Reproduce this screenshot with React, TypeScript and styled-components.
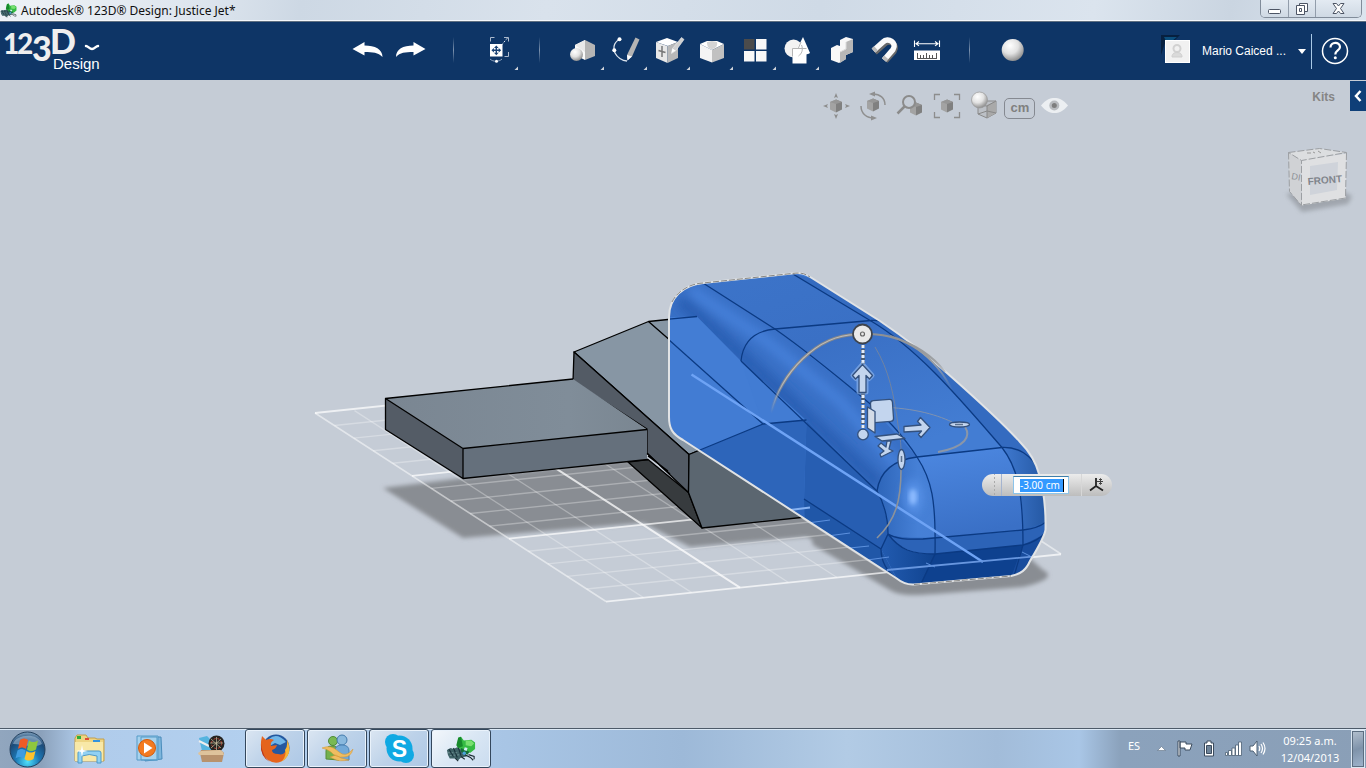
import React from "react";
import styled, { createGlobalStyle } from "styled-components";

const GlobalStyle = createGlobalStyle`
  *, *::before, *::after { box-sizing: border-box; }
  body { margin: 0; background: #c5ccd6; font-family: "Noto Sans", sans-serif; }
  button, input { font: inherit; color: inherit; margin: 0; padding: 0; border: 0; background: none; }
  svg { display: block; flex: none; }
`;

const Page = styled.div`
  display: flex;
  flex-direction: column;
  min-height: 100vh;
`;

/* Window frame */

const TitleBar = styled.header`
  display: flex;
  align-items: flex-start;
  justify-content: space-between;
  height: 22px;
  padding-right: 4px;
  background: linear-gradient(100deg, #eef2f6 0, #dde5ee 15%, #cdd8e4 22%, #d9e2ec 40%, #cfdae6 60%, #dbe4ee 80%, #cad5e1 90%, #dce5ef 100%);
  border-bottom: 1px solid #5f6f80;
  box-shadow: inset 0 -1px #f4f7fa;
`;

const WindowTitle = styled.h1`
  display: flex;
  align-items: center;
  gap: 4px;
  height: 20px;
  margin: 0;
  font-size: 12px;
  font-weight: 400;
  color: #101010;
  white-space: nowrap;
`;

const WindowControls = styled.div`
  display: flex;
  border: 1px solid #818c9a;
  border-top: 0;
  border-radius: 0 0 5px 5px;
  overflow: hidden;
`;

const WindowButton = styled.button<{ $wide?: boolean }>`
  display: grid;
  place-items: center;
  width: ${(p) => (p.$wide ? 46 : 27)}px;
  height: 17px;
  background: linear-gradient(#e3eaf2, #cfd9e4);
  & + & { border-left: 1px solid #929dab; }
`;

/* Application bar */

const AppBar = styled.div`
  display: grid;
  grid-template-columns: minmax(110px, 1fr) auto minmax(210px, 1fr);
  height: 58px;
  background: #0e3566;
  color: #fff;
`;

const BrandButton = styled.button`
  justify-self: start;
  height: 58px;
  cursor: pointer;
  svg { overflow: visible; }
`;

const Toolbar = styled.nav`
  display: flex;
  margin-left: 16px;
  padding-top: 11px;
`;

const ToolButton = styled.button`
  width: 43px;
  height: 38px;
`;

const Separator = styled.span`
  width: 1px;
  height: 26px;
  margin: 4px 22px 0 20px;
  background: linear-gradient(#0e3566, #7d93af, #0e3566);
`;

const Account = styled.div`
  display: flex;
  align-items: center;
  justify-content: flex-end;
  padding-right: 17px;
  font-family: "Liberation Sans", sans-serif;
  font-size: 12px;
`;

const AccountButton = styled.button`
  display: flex;
  align-items: center;
  gap: 12px;
  padding-right: 5px;
  white-space: nowrap;
`;

const HelpButton = styled.button`
  height: 35px;
  padding-left: 9px;
  border-left: 1px solid #a9c9e6;
`;

/* Modelling viewport */

const Viewport = styled.main`
  position: relative;
  flex: 1;
  min-height: 520px;
  background: #c5ccd6;
`;

const SceneCanvas = styled.svg`
  position: absolute;
  inset: 0;
  width: 100%;
  height: 100%;
`;

const Overlay = styled.div`
  position: relative;
  display: flex;
  flex-direction: column;
  align-items: flex-end;
`;

const OverlayRow = styled.div`
  display: flex;
  align-items: flex-start;
  padding-top: 1px;
`;

const ViewTools = styled.nav`
  display: flex;
  align-items: center;
  margin-right: 244px;
  padding-top: 6px;
`;

const ViewButton = styled.button`
  width: 37px;
  height: 38px;
`;

const UnitButton = styled.button`
  height: 21px;
  width: 31px;
  margin: 4px 6px 0 1px;
  border: 1px solid #858991;
  border-radius: 5px;
  font: bold 13px/18px "Liberation Sans", sans-serif;
  color: #808080;
`;

const KitsLabel = styled.span`
  padding: 7px 15px 0 0;
  font: bold 12px/18px "Liberation Sans", sans-serif;
  color: #858585;
`;

const KitsTab = styled.button`
  display: grid;
  place-items: center;
  width: 16px;
  height: 30px;
  background: #0f3f78;
`;

const CubeButton = styled.button`
  width: 80px;
  height: 76px;
  margin: 19px 6px 0 0;
`;

/* Floating dimension editor, anchored to the manipulator on the canvas */
const DimensionEditor = styled.form`
  position: absolute;
  top: calc(50% + 70px);
  left: calc(50% + 299px);
  display: flex;
  align-items: center;
  width: 130px;
  height: 22px;
  border-radius: 11px;
  background: linear-gradient(#ececec, #bdbdbd);
`;

const Grip = styled.span`
  width: 20px;
  height: 22px;
  border-right: 1px solid #a5b4cf;
  background: radial-gradient(circle, #aaa 1px, transparent 1px) 11px 2px / 3px 4px;
  background-repeat: repeat-y;
`;

const DimensionField = styled.span`
  display: flex;
  align-items: center;
  width: 56px;
  height: 18px;
  margin: 0 12px 0 11px;
  padding-left: 6px;
  background: #fff;
  border: 1px solid #8cc4ea;
  border-top-color: #3f7fab;
`;

const DimensionInput = styled.input`
  width: 44px;
  height: 13px;
  border-right: 1px solid #000;
  background: #3399ff;
  color: #fff;
  font-size: 10px;
  line-height: 13px;
  outline: 0;
`;

const AlignButton = styled.button`
  display: grid;
  place-items: center;
  width: 30px;
  height: 22px;
  border-left: 1px solid #d7d7d7;
`;

/* Taskbar */

const Taskbar = styled.footer`
  display: flex;
  height: 40px;
  border-top: 1px solid #4d5a69;
  box-shadow: inset 0 1px #dce9f6;
  background: linear-gradient(90deg, #91a6be 0, #8ba1bb 3%, #b0cceb 6%, #b3d0ef 20%, #a9c6e6 36%, #9db9d8 50%, #b2cbe5 62%, #a2bcd9 73%, #a9c6e6 79%, #8ba2bc 82%, #8a9fb7 100%);
`;

const TaskButton = styled.button<{ $w: number }>`
  display: grid;
  place-items: center;
  width: ${(p) => p.$w}px;
  height: 39px;
`;

const RunningButton = styled.button<{ $active?: boolean }>`
  display: grid;
  place-items: center;
  width: 60px;
  height: 39px;
  margin-right: 2px;
  border: 1px solid #34475c;
  border-radius: 3px;
  box-shadow: inset 0 0 0 1px #e9f2fb;
  background: ${(p) =>
    p.$active
      ? "linear-gradient(135deg, #f3f7fb, #dae7f4 50%, #cadcef)"
      : "linear-gradient(135deg, #dbe6f2, #bdd2e9 50%, #adc8e6)"};
`;

const Tray = styled.div`
  display: flex;
  align-items: center;
  margin-left: auto;
  color: #fff;
  font-size: 11px;
`;

const Language = styled.button`
  width: 30px;
  padding-bottom: 6px;
`;

const TrayButton = styled.button`
  display: grid;
  place-items: center;
  width: 24px;
  height: 39px;
`;

const Clock = styled.time`
  width: 82px;
  line-height: 17px;
  text-align: center;
`;

const ShowDesktop = styled.button`
  width: 14px;
  height: 38px;
  margin-right: 1px;
  border: 1px solid #dbe7f2;
  outline: 1px solid #5b6d80;
  outline-offset: -2px;
  background: linear-gradient(160deg, #b4c1cf, #7f93aa 50%, #9fb4cc);
`;

/* Toolbar icons share a 43 by 38 box */

const Tool = ({ label, menu, children }: { label: string; menu?: boolean; children: React.ReactNode }) => (
  <ToolButton type="button" aria-label={label}>
    <svg width="43" height="38" viewBox="0 0 43 38">
      {children}
      {menu && <path d="M42 33.5v3.5h-3.5z" fill="#ced3da" />}
    </svg>
  </ToolButton>
);

const View = ({ label, children }: { label: string; children: React.ReactNode }) => (
  <ViewButton type="button" aria-label={label}>
    <svg width="37" height="38" viewBox="0 0 37 38">{children}</svg>
  </ViewButton>
);

const SmallCube = ({ x, y }: { x: number; y: number }) => (
  <g>
    <path d={`M${x - 6} ${y - 4}l6-2.5v13l-6-3z`} fill="#a3a3a3" />
    <path d={`M${x + 6} ${y - 4}l-6-2.5v13l6-3z`} fill="#808080" />
    <path d={`M${x - 6} ${y - 4}l6-2.5 6 2.5-6 2z`} fill="#969696" />
  </g>
);

const Dragonfly = ({ size }: { size: number }) => (
  <svg width={size} height={size} viewBox="0 0 32 32">
    <path d="M1 17l4-2 3 1 4-2 8 4 2 6-6 1-3 3-4-2-5 0-2-4z" fill="#3f6266" />
    <path d="M3 16l5 8M8 15l4 10M13 14l3 9" stroke="#18313a" strokeWidth="1.200" />
    <path d="M2 20h12M4 23l12-1" stroke="#7d9fa1" strokeWidth=".8" strokeDasharray="2 2" />
    <path d="M20 22l6 3 3 3M24 22l6 2v3M16 24l4 3M10 26l3 3" fill="none" stroke="#1d2c33" strokeWidth="1.200" />
    <path d="M13 4l3-1 3 4 8-1 4 3v7l-5 4-8-1-6-6z" fill="#35bb43" />
    <path d="M13 4l3-1 2 10-5 2-2-3z" fill="#168a2b" />
    <path d="M21 7l6 0 3 3-3 3-6-1z" fill="#78e070" />
    <path d="M16 15l9 4-2 3-7-3z" fill="#176f3b" />
    <path d="M20 14l3 1-1 3-3-1z" fill="#d3eef4" />
    <circle cx="19.500" cy="20.500" r="1.800" fill="#4aa5d8" />
  </svg>
);

const TopTools = () => (
  <Toolbar aria-label="Modelling tools">
    <Tool label="Undo">
      <path d="M5.5 16L17.5 9v3.4C28 12.400 35.500 16 35.500 24C31 19.500 26 19 17.500 19v3.500z" fill="#fff" />
    </Tool>
    <Tool label="Redo">
      <path d="M35.500 16L23.500 9v3.400C13 12.400 6 16 6 24C10 19.500 15 19 23.500 19v3.500z" fill="#fff" />
    </Tool>
    <Separator />
    <Tool label="Transform" menu>
      <path d="M14.500 8.500v-4h4M28 4.500h4.500v4M32.500 19v4.500h-4" fill="none" stroke="#aab9cd" />
      <path d="M25.500 12l6-7" stroke="#dfe6ef" strokeDasharray="2 1.500" />
      <path d="M14 26c3 3 9 3 12 0" fill="none" stroke="#90a5c0" />
      <circle cx="20.500" cy="28.200" r="1.500" fill="#fff" />
      <rect x="14" y="11" width="12.500" height="12.500" fill="#fff" />
      <path d="M20.300 12.500l2.300 2.500h-1.600v1.600h1.700V15l2.500 2.300-2.500 2.300V18H21v1.700h1.600l-2.300 2.500-2.300-2.500h1.600V18h-1.700v1.600l-2.500-2.300 2.500-2.300v1.600h1.700V15H18z" fill="#1a4274" />
    </Tool>
    <Separator />
    <Tool label="Primitives" menu>
      <path d="M13 12l10-5v20l-10-5z" fill="#fafafa" />
      <path d="M23 7l10 5v11l-10 4z" fill="#b5b5b5" />
      <path d="M13 12l10-5v12z" fill="#e9e9e9" />
      <circle cx="14.500" cy="21.500" r="6.500" fill="url(#ball)" />
    </Tool>
    <Tool label="Sketch" menu>
      <path d="M14.500 6.300C8 10 8 16 10 20s7 8 12 8" fill="none" stroke="#d9e2ec" strokeWidth="1.300" />
      <path d="M30.500 4.500l4 2-7.500 17-4.500 4-.5-5.500z" fill="#b4b4b4" />
      <path d="M27 23.500l-4.500 4-.5-5.500z" fill="#fff" />
      <circle cx="14.500" cy="6.300" r="2" fill="#fff" />
      <circle cx="9.300" cy="17.300" r="2" fill="#fff" />
    </Tool>
    <Tool label="Construct" menu>
      <path d="M8 9l11-4 11 4-10 4z" fill="#fff" />
      <path d="M8 9l11.500 4v17L8 25z" fill="#e8e8e8" />
      <path d="M30 9l-10.500 4v17L30 25z" fill="#b9b9b9" />
      <path d="M14 13v11M10.500 17.500l7 2" stroke="#777" strokeWidth="1.500" />
      <path d="M33.500 4.500l2.500 2-8 11-4.500 3 1-5z" fill="#d0d0d0" stroke="#f0f0f0" strokeWidth=".6" />
      <path d="M27.500 17.500l-4 2.500 1-4.500z" fill="#fff" />
    </Tool>
    <Tool label="Modify" menu>
      <path d="M9 11l7-3h10l7 3-12 6z" fill="#fff" />
      <path d="M9 11l12 6v12.500L9 25z" fill="#f4f4f4" />
      <path d="M33 11l-12 6v12.500L33 25z" fill="#c1c1c1" />
      <path d="M16 9c0 5 2 7 5 7s6-3 5-7l-5-1z" fill="#d4d4d4" />
    </Tool>
    <Tool label="Pattern" menu>
      <rect x="10" y="6" width="10.500" height="10.500" fill="#4b4b4b" />
      <path d="M22 6h10.500v10.500H22zM10 18h10.500v10.500H10zM22 18h10.500v10.500H22z" fill="#f8f8f8" />
    </Tool>
    <Tool label="Grouping" menu>
      <circle cx="16.500" cy="15.500" r="9" fill="#f3f3f3" />
      <path d="M26 4l7 16c-2 2-12 3-15 0z" fill="#fff" />
      <path d="M15.500 15.500h14v15h-14z" fill="#fff" />
      <path d="M15.500 15.500h14M15.500 15.500v8M21 16l3-7M24.500 12c2 5 0 9-3 11" fill="none" stroke="#b5b5b5" />
    </Tool>
    <Tool label="Combine">
      <path d="M20 7l6-3 7 2v13l-7 3-6-4z" fill="#f8f8f8" />
      <path d="M26 9l7-3v13l-7 3z" fill="#b7b7b7" />
      <path d="M11 15l6-3 9 3v11l-7 4-8-3z" fill="#f8f8f8" />
      <path d="M20 19l6-3v10l-6 4z" fill="#b7b7b7" />
      <path d="M26 9v7l-6 3" fill="none" stroke="#ddd" />
    </Tool>
    <Tool label="Snap">
      <path d="M12 19.500l9.500-8.500c5-5 14 .5 9.500 7.500l-8.500 9.500" fill="none" stroke="#696969" strokeWidth="5.500" />
      <path d="M10.500 17.500l9.500-8.500c5-5 14.500 .5 10 7.500l-9 10.500" fill="none" stroke="#fafafa" strokeWidth="5.500" />
      <path d="M10.500 17.500l2.500-2.200M21 27l2.300-2.600" stroke="#bcbcbc" strokeWidth="5.500" />
    </Tool>
    <Tool label="Measure">
      <path d="M8.500 7.500v6.500M33.500 7.500v6.500M10 10.700h22M13 8.500l-3 2.200 3 2.200M29 8.500l3 2.200-3 2.200" fill="none" stroke="#fff" strokeWidth="1.100" />
      <rect x="8" y="17.500" width="26" height="9.500" fill="#fff" />
      <path d="M11.500 20v5M14.500 22v3M17.500 22v3M20.500 20v5M23.500 22v3M26.500 22v3M30.500 20v5M11 25.500h20" stroke="#565656" />
    </Tool>
    <Separator />
    <Tool label="Material">
      <circle cx="20.700" cy="17" r="11" fill="url(#ball)" />
    </Tool>
  </Toolbar>
);

const ViewBar = () => (
  <ViewTools aria-label="View tools">
    <View label="Pan">
      <SmallCube x={18} y={19} />
      <path d="M18 6l2 5-2-1-2 1zM18 32l2-5-2 1-2-1zM5 19l5-2-1 2 1 2zM32 19l-5-2 1 2-1 2z" fill="#8d8d8d" />
    </View>
    <View label="Orbit">
      <SmallCube x={18} y={18} />
      <path d="M6 19c0 8 6 12 13 12M30 18c0-7-5-11-12-11" fill="none" stroke="#8f8f8f" strokeWidth="1.500" />
      <path d="M20 4.500v5l-6-2.500zM16 28.500v5l6-2.500z" fill="#8f8f8f" />
    </View>
    <View label="Zoom">
      <SmallCube x={24} y={22} />
      <circle cx="17" cy="15" r="6" fill="#c5ccd6" stroke="#8b8b8b" strokeWidth="2" />
      <path d="M12.500 19.500L5.500 26.500" stroke="#8b8b8b" strokeWidth="2.500" />
    </View>
    <View label="Fit">
      <SmallCube x={18} y={19} />
      <path d="M5.500 13V7.500H11M25 7.500h5.500V13M5.500 25v5.500H11M25 30.500h5.500V25" fill="none" stroke="#8d8d8d" strokeWidth="1.300" />
    </View>
    <View label="Display mode">
      <path d="M12 18l8-4 10 0v12l-9 5-9-4z" fill="#bcc0c6" stroke="#8a8a8a" />
      <path d="M21 18l9-4v12l-9 5z" fill="#a9a9a9" />
      <path d="M12 18l9 1v12M21 19l9-5M12 27l9-3 9 2" fill="none" stroke="#888" />
      <circle cx="13.500" cy="13" r="8" fill="url(#ball)" stroke="#9a9a9a" strokeWidth=".7" />
    </View>
    <UnitButton type="button">cm</UnitButton>
    <button type="button" aria-label="Visibility">
      <svg width="27" height="20" viewBox="0 0 27 20">
        <path d="M0 9.500C5 3.500 9 2 13.500 2S22 3.500 27 9.500C22 15.500 18 17 13.500 17S5 15.500 0 9.500z" fill="#eceff2" />
        <circle cx="13.300" cy="9.500" r="5" fill="#b8bbbf" />
        <circle cx="13.300" cy="9.500" r="2.500" fill="#7e7e7e" />
      </svg>
    </button>
  </ViewTools>
);

const NavigationCube = () => (
  <CubeButton type="button" aria-label="View orientation">
    <svg width="80" height="76" viewBox="0 0 80 76">
      <path d="M6 50l16 18 46-8 4-8-20-10z" fill="#8c9198" opacity=".65" filter="url(#soft)" />
      <path d="M8.500 8.500l31-4 27 4-45 10z" fill="#dcdee0" />
      <path d="M8.500 8.500l13 8v45l-12-14z" fill="#d0d2d5" />
      <path d="M21.500 16.500l45-7-1 45-44 7z" fill="#dfe0e2" />
      <path d="M30 22l28-4-1 28-27 5z" fill="#cfd3da" />
      <path d="M8.500 8.500l31-4 27 4-45 8zM8.500 8.500l1 39 12 14v-45M66.500 9l-1 45-44 7" fill="none" stroke="#9c9fa3" strokeDasharray="7 2" />
      <path d="M27 9h4M33 8l2 1M38 7l3 2" stroke="#999" />
      <text x="28" y="41" transform="rotate(-5 28 41)" fontFamily="Liberation Sans, sans-serif" fontWeight="700" fontSize="10" fill="#7f848b">FRONT</text>
      <text x="11" y="35" transform="rotate(10 11 35)" fontFamily="Liberation Sans, sans-serif" fontSize="9" fill="#8c9097">DI</text>
    </svg>
  </CubeButton>
);

/* Model scene */

const SLOPE = 0.104;
const rows = Array.from({ length: 16 }, (_, i) => ({
  x: 315 + i * 19.4,
  y: 413 + i * 12.57,
  major: i % 5 === 0,
}));
const columns = [643.5, 691.7, 740, 788.5, 837, 886, 935, 983.5, 1032].map((x, i) => ({
  x,
  y: 601.5 - (x - 606) * SLOPE,
  major: i === 2 || i === 7,
}));

const BODY =
  "M669 317C669 298 683 285 703 283L792 273.500C801 272.500 804 273 811 277.500L880 321C905 338 926 354 947 373C973 396 1002 422 1020 442C1031 453 1036 463 1039 474C1044 491 1046 507 1045.500 530C1044 538 1036 551 1030 561C1026 570 1021 574 1011 576L914 584.500C906 585 901 582 896 578L683 440C672 434 669 428 669 417Z";

const Scene = () => (
  <SceneCanvas viewBox="0 80 1366 648" preserveAspectRatio="xMidYMid meet" role="img" aria-label="Jet model on the work plane">
    <defs>
      <radialGradient id="ball" cx=".38" cy=".3" r=".75">
        <stop offset="0" stopColor="#fff" />
        <stop offset=".5" stopColor="#e2e2e2" />
        <stop offset="1" stopColor="#858585" />
      </radialGradient>
      <filter id="soft" x="-20%" y="-20%" width="140%" height="140%"><feGaussianBlur stdDeviation="2" /></filter>
      <filter id="blend" x="-50%" y="-50%" width="200%" height="200%"><feGaussianBlur stdDeviation="5" /></filter>
      <clipPath id="bodyClip"><path d={BODY} /></clipPath>
      <clipPath id="filletClip"><path d="M669 317C669 298 683 285 703 283L775 329L862 397L917 457C895 460 880 475 877 491L806 420L741 361L697 316.500Z" /></clipPath>
      <linearGradient id="wingTop" x1="0" x2="1"><stop offset="0" stopColor="#7a8692" /><stop offset=".7" stopColor="#808d99" /><stop offset="1" stopColor="#7a8691" /></linearGradient>
      <linearGradient id="topFace" x1="0" x2=".6" y1="0" y2="1"><stop offset="0" stopColor="#3c74c9" /><stop offset=".45" stopColor="#3a70c5" /><stop offset="1" stopColor="#437dd3" /></linearGradient>
      <linearGradient id="nose" x1="0" x2=".2" y1="0" y2="1"><stop offset="0" stopColor="#4d88e1" /><stop offset="1" stopColor="#3a70c6" /></linearGradient>
      <linearGradient id="edge" x1="0" x2="1"><stop offset="0" stopColor="#3f79d0" /><stop offset="1" stopColor="#22559f" /></linearGradient>
      <linearGradient id="corner" x1="0" x2="1"><stop offset="0" stopColor="#2d65b9" /><stop offset=".7" stopColor="#4680d6" /><stop offset="1" stopColor="#467fd5" /></linearGradient>
      <linearGradient id="lowCorner" x1="0" x2="1"><stop offset="0" stopColor="#225bb0" /><stop offset="1" stopColor="#10438f" /></linearGradient>
      <linearGradient id="arcLeft" x1="771" x2="830" y1="413" y2="345" gradientUnits="userSpaceOnUse"><stop offset="0" stopColor="#8b8e92" stopOpacity="0" /><stop offset=".4" stopColor="#85878a" /></linearGradient>
      <linearGradient id="arcShine" x1="771" x2="830" y1="413" y2="345" gradientUnits="userSpaceOnUse"><stop offset="0" stopColor="#c4c6c8" stopOpacity="0" /><stop offset=".4" stopColor="#bcbdbe" /></linearGradient>
      <linearGradient id="arcRight" x1="890" x2="953" y1="335" y2="390" gradientUnits="userSpaceOnUse"><stop offset="0" stopColor="#8e9093" /><stop offset=".6" stopColor="#9da0a3" /><stop offset="1" stopColor="#9da3ab" stopOpacity="0" /></linearGradient>
    </defs>

    <g fill="#898d93" filter="url(#soft)">
      <path d="M383 488L463 478L628 460L704 520L806 512L830 545L806 537L690 547L643 523L463 538Z" />
      <path d="M806 515L813 545L888 589C900 597 915 595 935 594L1023 587C1042 583 1056 576 1043 570L1020 550Z" />
    </g>

    <g stroke="#fff" fill="none">
      {rows.map((r) => (
        <path key={r.x} d={`M${r.x} ${r.y}L${r.x + 455} ${r.y - 455 * SLOPE}`} strokeWidth={r.major ? 1.8 : 1.4} opacity={r.major ? 0.7 : 0.3} />
      ))}
      {columns.map((c) => (
        <path key={c.x} d={`M${c.x} ${c.y}L${c.x - 289} ${c.y - 187}`} strokeWidth={c.major ? 2 : 1.3} opacity={c.major ? 0.75 : 0.3} />
      ))}
      <path d="M315 413L606 601.500M1032 535L1061 554" strokeWidth="1.600" opacity=".5" />
    </g>

    <g stroke="#000" strokeWidth="1.300" strokeLinejoin="round">
      <path d="M628 462L648 459.500L688.500 492.500L702 528Z" fill="#373b3e" />
      <path d="M574 352L648.500 321.500L697 316.500L763 424L689 454.500Z" fill="#8796a4" />
      <path d="M574 352L573 381L647 429V453L688.500 492.500L689 454.500Z" fill="#535b65" />
      <path d="M689 454.500L763 424L806 420V517L702 528L688.500 492.500Z" fill="#5b6670" />
      <path d="M385.500 398.500L573 379L647 429.500L463 448.500Z" fill="url(#wingTop)" stroke="none" />
      <path d="M463 448.500L647 429.500V459.500L463 478.500Z" fill="#65707c" stroke="none" />
      <path d="M385.500 398.500L463 448.500V478.500L385.500 429.500Z" fill="#545c66" />
      <path d="M573 379L385.500 398.500M463 448.500L647 429.500M463 478.500L648 459.500M647 453.500L670 474M648 456L668 471M648.500 321.500L680 349" fill="none" />
    </g>

    <path d={BODY} fill="#427cd3" />
    <g clipPath="url(#bodyClip)">
      <path d="M648 321L697 316L741 361L763 424Z" fill="#437dd4" />
      <path d="M640 475L763 424L806.500 420L804 499L840 560Z" fill="#2d65ba" />
      <path d="M806.500 420L877 491C884 505 888 520 888 534L881 549L804 499Z" fill="#275eb2" />
      <path d="M804 499L881 549L900 585L805 524Z" fill="#2057a8" />
      <path d="M703 283L792 273.500L871 321C920 350 965 405 1002 447.500L917 457C890 420 840 375 775 329Z" fill="url(#topFace)" />
      <path d="M792 273.500L871 321C920 350 965 405 1002 447.500L1045 470V430L860 290Z" fill="#346bc0" />
      <path d="M669 317C669 298 683 285 703 283L775 329L862 397L917 457C895 460 880 475 877 491L806 420L741 361L697 316.500Z" fill="#3970c6" />
      <g clipPath="url(#filletClip)" fill="none" filter="url(#blend)">
        <path d="M680 300L741 355L880 485" stroke="#2a60b5" strokeWidth="15" />
        <path d="M690 290L765 340L840 401L910 480" stroke="#447fd8" strokeWidth="12" />
      </g>
      <path d="M877 491C880 470 894 460 917 457C932 480 936 500 935 540C920 540 905 539 888 534C887 518 884 503 877 491Z" fill="url(#corner)" />
      <path d="M917 457L1002 447.500C1017 467 1023 490 1023 530L935 539C936 500 932 480 917 457Z" fill="url(#nose)" />
      <path d="M1002 447.500C1015 447 1025 453 1050 472V528L1023 530C1023 490 1017 467 1002 447.500Z" fill="url(#edge)" />
      <path d="M888 534C910 542 960 536 1023 530L1050 521V533L1023 545L935 554C912 554 900 548 888 534Z" fill="#2c63b7" />
      <path d="M881 549L888 534C900 550 912 554 935 554L920 588H902Z" fill="url(#lowCorner)" />
      <path d="M935 554L1023 545L1013 580L918 590Z" fill="#0e418f" />
      <path d="M1023 545L1047 533L1030 580H1010Z" fill="#184c9d" />
      <ellipse cx="913" cy="497" rx="10" ry="17" fill="#5e98ee" opacity=".7" filter="url(#blend)" />
      <ellipse cx="913" cy="497" rx="4" ry="8" fill="#8dbbff" filter="url(#soft)" />
      <g fill="none" stroke="#0b3a83" strokeWidth="1.300">
        <path d="M648 321L763 424L689 454.500M763 424L806.500 420M648 321L697 316.500M741 361L877 491M804 499L881 549" />
        <path d="M703 283L775 329C805 350 838 377 862 397C885 416 905 438 917 457C932 480 936 500 935 554L920 586" />
        <path d="M792 273.500L871 321C920 350 965 405 1002 447.500C1017 467 1023 490 1023 545L1013 580" />
        <path d="M741 361C743 341 754 331 775 329L871 320.500C882 319 890 326 900 333" />
        <path d="M877 491C880 470 894 460 917 457L1002 447.500C1018 447 1030 453 1042 474" />
        <path d="M877 491C885 505 888 520 888 534L881 549C881 562 887 572 898 580" />
        <path d="M888 534C898 540 910 539 923 539L1023 530C1032 529 1040 527 1046 522M888 534C900 550 912 554 935 554L1023 545C1032 543 1040 539 1046 532" />
      </g>
      <g fill="none">
        <path d="M691.500 374.500L983 562" stroke="#6ea3f5" strokeWidth="2.500" />
        <path d="M887 570L1061 554" stroke="#6796df" strokeWidth="1.800" />
        <path d="M790 510L810 507.500" stroke="#86b1f1" strokeWidth="2" />
        <path d="M800 524l30-4M820 537l30-4M840 549l29-3M860 561l29-4M926 563l9 4M1022 552l8 4" stroke="#5d91de" />
      </g>
    </g>
    <path d={BODY} fill="none" stroke="#e1e3e5" strokeWidth="2" />
    <path d="M672 302C677 292 688 284 703 283L792 273.500C801 272.500 804 273 810 277M914 584.500L1011 576" fill="none" stroke="#706e6b" strokeWidth=".8" strokeDasharray="6 2" />

    <g fill="none">
      <path d="M771 413C781 373 817 335 856 334.500" stroke="url(#arcLeft)" strokeWidth="3.200" />
      <path d="M771 413C781 373 817 335 856 334.500" stroke="url(#arcShine)" strokeWidth="1.200" />
      <path d="M870 334C905 335 935 355 953 392M890 336C915 344 933 356 945 372" stroke="url(#arcRight)" strokeWidth="2" />
      <path d="M875 347C889 370 894 395 898 425C900 436 901 444 901 450" stroke="#6f83a3" />
      <path d="M901 470C901 500 896 520 877 538" stroke="#8c929a" strokeWidth="1.600" />
      <path d="M873 407C910 407 935 414 952 422" stroke="#7f92b0" />
      <path d="M965 427C971 436 966 447 938 452" stroke="#8a96a8" strokeWidth="2" />
      <path d="M863 345V430" stroke="#4d5d75" strokeWidth="4" strokeDasharray="3 1" />
      <path d="M863 345V430" stroke="#e6eefa" strokeWidth="3" strokeDasharray="3 2" />
    </g>
    <circle cx="862.500" cy="334" r="9.500" fill="#e9e9e9" stroke="#3e444d" strokeWidth="1.800" />
    <circle cx="862.500" cy="334" r="2" fill="none" stroke="#666" strokeWidth="1.200" />
    <path d="M862.500 364.500L872 375.500L869 378.500L866 375.500V392H859V375.500L856 378.500L853 375.500Z" fill="none" stroke="#a8caf8" strokeWidth="5" strokeLinejoin="round" opacity=".5" />
    <g fill="#c3d5ee" stroke="#34517d" strokeWidth="1.300" strokeLinejoin="round">
      <path d="M862.500 364.500L872.500 375.500L869.500 379L866 375.500V392.500H859V375.500L855.500 379L852.500 375.500Z" />
      <path d="M930 427.500L921 437.500L918.500 434.500L921.500 431L904 432V426.500L921 425L917.500 421.500L920.500 417.500Z" />
      <path d="M887 441H891L889 449L893 451L881 457L880 454L884 451L878 446L881 443L886 447Z" />
      <rect x="871" y="400" width="22" height="22" rx="3" transform="rotate(-4 882 411)" />
      <path d="M867.500 407L875 411.500V433L867.500 428Z" fill="#d3dbe7" />
      <path d="M875 436.500L897 434L905 438.500L882 441Z" />
      <circle cx="863" cy="434.500" r="5.300" />
      <ellipse cx="901.500" cy="459.500" rx="3.500" ry="10" />
      <ellipse cx="959.500" cy="424.500" rx="10" ry="2.500" />
    </g>
    <path d="M901.500 456v6M955 424.500h8" stroke="#5c728f" strokeWidth="1.500" />
  </SceneCanvas>
);

const App = () => (
  <Page>
    <GlobalStyle />
    <TitleBar>
      <WindowTitle>
        <Dragonfly size={17} />
        Autodesk® 123D® Design: Justice Jet*
      </WindowTitle>
      <WindowControls>
        <WindowButton type="button" aria-label="Minimize">
          <svg width="13" height="12" viewBox="0 0 13 12"><rect x=".5" y="6.500" width="12" height="4" rx="1" fill="#fff" stroke="#4d5565" /></svg>
        </WindowButton>
        <WindowButton type="button" aria-label="Restore">
          <svg width="12" height="12" viewBox="0 0 12 12"><path d="M3.500 .5h8v8h-8z" fill="#fff" stroke="#4d5565" /><path d="M.5 2.500h8v9h-8z" fill="#fff" stroke="#4d5565" /><path d="M3.500 5.500h2v3h-2z" fill="none" stroke="#4d5565" /></svg>
        </WindowButton>
        <WindowButton type="button" aria-label="Close" $wide>
          <svg width="13" height="11" viewBox="0 0 13 11"><path d="M1 .5h3.500l2 2.500 2-2.500H12L8.500 5.500l3.500 5H8.500l-2-2.500-2 2.500H1l3.500-5z" fill="#fff" stroke="#4d5565" /></svg>
        </WindowButton>
      </WindowControls>
    </TitleBar>

    <AppBar>
      <BrandButton type="button" aria-label="Application menu">
        <svg width="110" height="58" viewBox="0 0 110 58">
          <g fill="#efefef" fontFamily="Lato, sans-serif" fontWeight="900">
            <text x="3" y="32" fontSize="28">1</text>
            <text x="17" y="32" fontSize="28">2</text>
            <text x="32" y="39" fontSize="34">3</text>
            <text x="50" y="32" fontSize="34">D</text>
          </g>
          <path d="M86 24c2 0 3.500 3 6 3s4-3 6-3" fill="none" stroke="#fff" strokeWidth="2.500" strokeLinecap="round" />
          <text x="53" y="47" fontSize="15" fontFamily="Liberation Sans, sans-serif" fill="#fff">Design</text>
        </svg>
      </BrandButton>
      <TopTools />
      <Account>
        <AccountButton type="button">
          <svg width="29" height="35" viewBox="0 0 29 35">
            <path d="M0 1h19l-6 6-9 2-4 12z" fill="#07203f" />
            <path d="M3 3h13l-5 4H5z" fill="#0b4e7c" />
            <rect x="4.500" y="6.500" width="24" height="22" fill="#f1f1f1" stroke="#fff" />
            <circle cx="16" cy="14.500" r="3.500" fill="none" stroke="#d2d2d2" strokeWidth="2" />
            <path d="M11 23c0-4 3-4.500 5-4.500s5 .5 5 4.500z" fill="#dadada" stroke="#cfcfcf" />
          </svg>
          Mario Caiced ...
          <svg width="8" height="5" viewBox="0 0 8 5"><path d="M0 0h8L4 5z" fill="#fff" /></svg>
        </AccountButton>
        <HelpButton type="button" aria-label="Help">
          <svg width="28" height="28" viewBox="0 0 28 28">
            <circle cx="14" cy="14" r="12.500" fill="none" stroke="#fff" strokeWidth="1.500" />
            <path d="M9.500 10.500c0-6 9.500-6 9.500-.5 0 3.500-4.700 3.500-4.700 7.500" fill="none" stroke="#fff" strokeWidth="2.200" />
            <circle cx="14.300" cy="20.800" r="1.500" fill="#fff" />
          </svg>
        </HelpButton>
      </Account>
    </AppBar>

    <Viewport>
      <Scene />
      <Overlay>
        <OverlayRow>
          <ViewBar />
          <KitsLabel>Kits</KitsLabel>
          <KitsTab type="button" aria-label="Show kits">
            <svg width="8" height="12" viewBox="0 0 8 12"><path d="M6.500 1L2 6l4.500 5" fill="none" stroke="#fff" strokeWidth="2.500" /></svg>
          </KitsTab>
        </OverlayRow>
        <NavigationCube />
      </Overlay>
      <DimensionEditor>
        <Grip />
        <DimensionField>
          <DimensionInput aria-label="Distance" defaultValue="-3.00 cm" />
        </DimensionField>
        <AlignButton type="button" aria-label="Change orientation">
          <svg width="16" height="16" viewBox="0 0 16 16">
            <path d="M7 1v8M7 9l-6 4.500M7 9l7 4.500" stroke="#222" strokeWidth="1.800" />
            <path d="M8 4.500h6M11.500 2v5M10 3l1.500-1.500L13 3M10 6l1.500 1.500L13 6" fill="none" stroke="#444" />
          </svg>
        </AlignButton>
      </DimensionEditor>
    </Viewport>

    <Taskbar>
      <TaskButton $w={56} type="button" aria-label="Start">
        <svg width="38" height="38" viewBox="0 0 38 38">
          <defs>
            <radialGradient id="orb" cx=".5" cy=".85" r=".85"><stop offset="0" stopColor="#4fe0fb" /><stop offset=".4" stopColor="#1c78b5" /><stop offset=".75" stopColor="#1c4a78" /><stop offset="1" stopColor="#7fa0bd" /></radialGradient>
          </defs>
          <circle cx="18.500" cy="19.500" r="17.500" fill="url(#orb)" stroke="#23405e" />
          <path d="M4 14C7 4 29 2 33 14C25 19 12 14 4 14z" fill="#c3d9ea" opacity=".45" />
          <path d="M11 10c3-2 5-2 8 0l-2 9c-3-2-5-2-8 0z" fill="#ee5b26" />
          <path d="M20 10.500c3 2 5 2 9 0l-2 9c-4 2-6 2-9 0z" fill="#8fc73e" />
          <path d="M8.500 20.500c3-2 5-2 8 0l-2 8c-3-2-5-2-8 0z" fill="#3f9ce0" />
          <path d="M17.500 21c3 2 5 2 9 0l-2 8c-4 2-6 2-9 0z" fill="#fdc22d" />
        </svg>
      </TaskButton>
      <TaskButton $w={66} type="button" aria-label="Windows Explorer">
        <svg width="32" height="30" viewBox="0 0 32 30">
          <path d="M2 4l2-3h9l2 3h7l2 1h7v22H2z" fill="#eed583" stroke="#c29f4c" />
          <path d="M4 2h4v3H4z" fill="#2fae3a" /><path d="M12 4h4v2h-4z" fill="#df4c36" /><path d="M20 6h7v2h-7z" fill="#3494dd" />
          <path d="M2 8h28v19H2z" fill="#f8e8a7" />
          <path d="M5 29V19q0-2 2-2h19q2 0 2 2v10h-4v-7q-8-3-15 0v7z" fill="#91d1f3" stroke="#4d99c9" />
          <path d="M9 11l1 5 5 1-5 1-1 5-1-5-5-1 5-1z" fill="#fff" />
        </svg>
      </TaskButton>
      <TaskButton $w={56} type="button" aria-label="Media Player">
        <svg width="28" height="27" viewBox="0 0 28 27">
          <path d="M9 2h16l1 22-17 2z" fill="#7eb6dc" stroke="#4a8cbb" />
          <path d="M5 2h16v23H5zM1 1h21v24H1z" fill="#a7d2ed" stroke="#559ac7" />
          <circle cx="11" cy="13" r="8.500" fill="#f37a20" stroke="#d15b0c" />
          <path d="M8 7.500v11L16.500 13z" fill="#fff" />
        </svg>
      </TaskButton>
      <TaskButton $w={67} type="button" aria-label="Games">
        <svg width="30" height="28" viewBox="0 0 30 28">
          <path d="M2 3l8-2 9 9-5 6H5z" fill="#55b4df" /><path d="M2 6l10 5" stroke="#eee" strokeWidth="2" />
          <circle cx="19.500" cy="8.500" r="8" fill="#252321" /><circle cx="19.500" cy="8.500" r="5" fill="none" stroke="#c64836" strokeDasharray="2 2" /><path d="M13 8h13M19.500 2v13M14 4l10 9M24 4l-10 9" stroke="#ccc4a5" strokeWidth=".7" />
          <path d="M4 15h20l3 3-2 9H5l-2-9z" fill="#b8926d" /><path d="M4 16l-3 2 1 2h25l-1-3-3-2z" fill="#dec39c" />
        </svg>
      </TaskButton>
      <RunningButton type="button" aria-label="Firefox">
        <svg width="32" height="32" viewBox="0 0 32 32">
          <circle cx="17" cy="15" r="13.500" fill="#24589f" /><path d="M10 6q8-7 17 3l-6 3-5-2-7 4z" fill="#70b6e8" />
          <path d="M3 3l4 4q4-2 8 0-4 2-3 6l6-1q-1 4-5 5 0 4 6 4 7 2 8-5 2 3 1-5 4 9-2 15-8 7-17 1-10-7-6-24z" fill="#e5641d" />
          <path d="M28 6q7 16-6 23 6-6 4-12 3-4 2-11z" fill="#f7b535" /><path d="M2 11q-1 13 9 18-7-4-9-18z" fill="#b9361b" />
        </svg>
      </RunningButton>
      <RunningButton type="button" aria-label="Messenger">
        <svg width="33" height="30" viewBox="0 0 33 30">
          <circle cx="12" cy="7" r="4.500" fill="#79b953" stroke="#4d8b36" /><path d="M5 25V17q0-5 6-5t7 5v9z" fill="#73b04d" stroke="#568c39" />
          <circle cx="21" cy="6" r="5" fill="#8ab9de" stroke="#447bac" /><path d="M14 25V17q0-6 7-6t7 6v9z" fill="#72a9d8" stroke="#4a82b5" />
          <path d="M1 14q9-4 17 4 7 6 14-3-2 8-9 8-8 1-13-5-4-3-9-4zM9 23l6-2 5 3 8 2q-10 2-15-1z" fill="#efbd61" stroke="#d5922f" strokeWidth=".5" />
        </svg>
      </RunningButton>
      <RunningButton type="button" aria-label="Skype">
        <svg width="31" height="31" viewBox="0 0 31 31">
          <circle cx="15.500" cy="15.500" r="13" fill="#10a9e3" /><circle cx="9" cy="9" r="8" fill="#10a9e3" /><circle cx="22" cy="22" r="8" fill="#10a9e3" />
          <text x="15.500" y="23.500" textAnchor="middle" fontFamily="Liberation Sans, sans-serif" fontWeight="700" fontSize="23" fill="#fff">S</text>
        </svg>
      </RunningButton>
      <RunningButton type="button" aria-label="123D Design" $active>
        <Dragonfly size={30} />
      </RunningButton>
      <Tray>
        <Language type="button">ES</Language>
        <TrayButton type="button" aria-label="Hidden icons">
          <svg width="9" height="5" viewBox="0 0 9 5"><path d="M.5 4.500l4-4 4 4z" fill="#fff" stroke="#5e7083" strokeWidth=".6" /></svg>
        </TrayButton>
        <TrayButton type="button" aria-label="Action Center">
          <svg width="17" height="17" viewBox="0 0 17 17"><path d="M1 1h2v15H1zM3 2h6v2h6l-2 6H8V8H3z" fill="#fff" stroke="#3c4c5e" /></svg>
        </TrayButton>
        <TrayButton type="button" aria-label="Battery">
          <svg width="12" height="17" viewBox="0 0 12 17"><path d="M4 1h4v2h2.500v13h-9V3H4z" fill="#fff" stroke="#3c4c5e" /><path d="M3.500 5.500h5v8h-5z" fill="#6f8499" stroke="#3c4c5e" /></svg>
        </TrayButton>
        <TrayButton type="button" aria-label="Network">
          <svg width="17" height="15" viewBox="0 0 17 15"><path d="M.5 11.500h2v3h-2zM3.500 9.500h3v5h-3zM7 7h3v7.500H7zM10.500 4h3v10.500h-3zM13.500 1h3v13.500h-3z" fill="#fff" stroke="#4d6074" strokeWidth=".8" /></svg>
        </TrayButton>
        <TrayButton type="button" aria-label="Volume">
          <svg width="17" height="17" viewBox="0 0 17 17"><path d="M1 6h3l4-5v15l-4-5H1z" fill="#fff" stroke="#4d6074" /><path d="M10 6q1.500 2.500 0 5M12 4q3 4.500 0 9M14 2.500q4 6 0 12" fill="none" stroke="#fff" strokeWidth="1.200" /></svg>
        </TrayButton>
        <Clock dateTime="2013-04-12T09:25">09:25 a.m.<br />12/04/2013</Clock>
        <ShowDesktop type="button" aria-label="Show desktop" />
      </Tray>
    </Taskbar>
  </Page>
);

export default App;
